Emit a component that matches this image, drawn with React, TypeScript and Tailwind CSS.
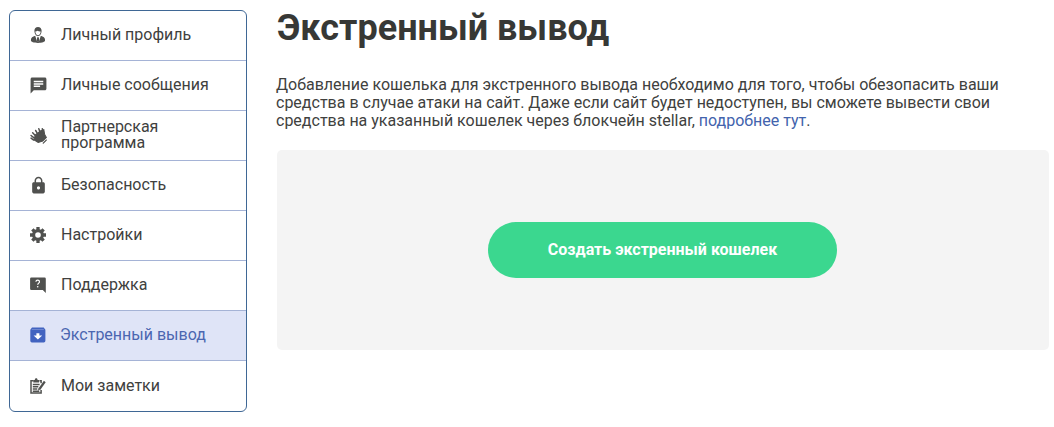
import type { ReactNode } from "react";
import clsx from "clsx";
import { MdChat, MdLock } from "react-icons/md";

// ─── Icons ────────────────────────────────────────────────────────────────────

function ProfileIcon() {
    return (
        <svg viewBox="0 0 16 16" className="h-4 w-4" fill="currentColor">
            <path d="M.9 13.3c0-2.500 1.700-3.700 4.300-4.500L7 14.500h2L10.800 8.800c2.600.8 4.300 2 4.300 4.500 0 1.700-3 2.600-7.100 2.600S.9 15 .9 13.300Z" />
            <path d="M7.200 10.300h1.600l.7 4.500h-3Z" />
            <path
                fillRule="evenodd"
                d="M4.400 3.800C4.400 1.400 5.800 0 8 0s3.600 1.400 3.600 3.800C11.600 6.800 9.900 9.200 8 9.200S4.400 6.800 4.400 3.800Zm.9.700C5.500 6.600 6.700 8.300 8 8.300s2.500-1.700 2.700-3.900C9.400 4.500 8.300 4.300 7.600 3.700 6.900 4.200 6.200 4.500 5.300 4.500Z"
            />
        </svg>
    );
}

function PartnersIcon() {
    return (
        <svg viewBox="0 0 16 16" className="h-[17px] w-[17px]" fill="none" stroke="currentColor" strokeLinecap="round">
            <path d="m5 7.500 5.500-4.300 2.500-.6.800 4.600 1.600 2.600-3.500 3.500-4.200 1.200-4-2.500Z" fill="currentColor" strokeWidth="1" />
            <path d="M3.500 12.300 1 10.500M3.500 10 1 8M4.700 7.800 2.500 5.500M6.900 5.900 5.300 3.300M9.200 4.200 8.300 1.700M12 3 11.600 1.700" strokeWidth="1.400" />
            <path d="M15.300 12.300 12.500 15.200" strokeWidth="1.200" />
        </svg>
    );
}

const GEAR_TEETH = [0, 45, 90, 135];

function SettingsIcon() {
    return (
        <svg viewBox="0 0 16 16" className="h-4 w-4" fill="none" stroke="currentColor">
            <circle cx="8" cy="8" r="4.400" strokeWidth="3.200" />
            {GEAR_TEETH.map((angle) => (
                <path key={angle} d="M8 0v3M8 13v3" strokeWidth="3.300" transform={`rotate(${angle} 8 8)`} />
            ))}
        </svg>
    );
}

function SupportIcon() {
    return (
        <svg viewBox="0 0 16 16" className="h-4 w-4">
            <path d="M1.300.5h13.300a1.200 1.200 0 0 1 1.200 1.200V15.900L12.800 12.900H1.300A1.200 1.200 0 0 1 .1 11.700V1.700A1.200 1.200 0 0 1 1.300.5Z" fill="currentColor" />
            <path d="M5.900 4.800c.1-1.200.8-1.700 1.800-1.700s1.800.6 1.800 1.600c0 1.300-1.800 1.500-1.800 3.100" fill="none" stroke="#fff" strokeWidth="1.200" />
            <circle cx="7.700" cy="9.800" r=".8" fill="#fff" />
        </svg>
    );
}

function WithdrawIcon() {
    return (
        <svg viewBox="0 0 16 16" className="h-4 w-4">
            <path d="M2 .5h11.700L15.400 2.700v11.100a1.600 1.600 0 0 1-1.600 1.600H1.900A1.600 1.600 0 0 1 .3 13.800V2.700Z" fill="currentColor" />
            <path d="M1.800 2.500h12" stroke="#dfe4f7" strokeOpacity=".4" strokeWidth=".7" />
            <path d="M6.400 6.300h3v2.200h2.800L7.900 12.400 3.600 8.500h2.800Z" fill="#fff" />
        </svg>
    );
}

function NotesIcon() {
    return (
        <svg viewBox="0 0 16 16" className="h-4 w-4" fill="none" stroke="currentColor">
            <path d="M9.500 2.700h1.600v2.500M11.100 12v3.100H1V2.700H3.500" strokeWidth="1.500" />
            <path d="M3.300 4.500V2H4.800C4.800.8 5.400.2 6.200.2S7.600.8 7.600 2h1.500v2.500Z" fill="currentColor" stroke="none" />
            <path d="M2.800 6.500h6.800M2.800 8.800h5.500M2.800 11h4.500M2.800 13.200h6.500" strokeWidth="1.400" />
            <path d="M14.800 3.500 9.500 11" strokeWidth="2.200" />
            <path d="m8.500 9.900 2 1.400-2.500 1.500Z" fill="currentColor" stroke="none" />
        </svg>
    );
}

// ─── Menu ─────────────────────────────────────────────────────────────────────

type MenuItem = {
    label: string;
    icon: ReactNode;
    active?: boolean;
};

const MENU_ITEMS: MenuItem[] = [
    { label: "Личный профиль", icon: <ProfileIcon /> },
    { label: "Личные сообщения", icon: <MdChat className="h-[19px] w-[19px]" /> },
    { label: "Партнерская программа", icon: <PartnersIcon /> },
    { label: "Безопасность", icon: <MdLock className="h-[19px] w-[19px]" /> },
    { label: "Настройки", icon: <SettingsIcon /> },
    { label: "Поддержка", icon: <SupportIcon /> },
    { label: "Экстренный вывод", icon: <WithdrawIcon />, active: true },
    { label: "Мои заметки", icon: <NotesIcon /> },
];

function Sidebar() {
    return (
        <nav className="h-[402px] w-[238px] shrink-0 overflow-hidden rounded-[6px] border border-[#3f6795]">
            {MENU_ITEMS.map((item) => (
                <a
                    key={item.label}
                    href="#"
                    className={clsx(
                        "flex h-[50px] items-center border-b border-[#a5b3d6] pb-px pl-[18px] text-base leading-4 last:border-b-0 last:pb-0",
                        item.active ? "bg-[#dfe4f7] text-[#4b66b0]" : "text-[#40413e]"
                    )}
                >
                    <span
                        className={clsx(
                            "flex w-5 shrink-0 justify-center",
                            item.active ? "text-[#4263c0]" : "text-[#50514f]"
                        )}
                    >
                        {item.icon}
                    </span>
                    <span className={clsx("w-[160px]", item.active ? "ml-3" : "ml-[13px]")}>{item.label}</span>
                </a>
            ))}
        </nav>
    );
}

// ─── Page ─────────────────────────────────────────────────────────────────────

export default function App() {
    return (
        <div className="flex h-[427px] items-start overflow-hidden bg-white pl-[9px] pt-[10px] font-['Roboto',sans-serif] text-[#40413e]">
            <Sidebar />
            <main className="ml-[30px] w-[772px] shrink-0">
                <h1 className="text-[36px] font-bold leading-9 text-[#373835]">Экстренный вывод</h1>
                <p className="-ml-px mt-[30px] text-base leading-[18px]">
                    Добавление кошелька для экстренного вывода необходимо для того, чтобы обезопасить ваши средства в случае
                    атаки на сайт. Даже если сайт будет недоступен, вы сможете вывести свои средства на указанный кошелек
                    через блокчейн stellar,{" "}
                    <a href="#" className="text-[#4263ad]">подробнее тут</a>.
                </p>
                <section className="mt-5 flex h-[200px] items-center rounded-[5px] bg-[#f4f4f4] pl-[211px]">
                    <button
                        type="button"
                        className="h-14 w-[349px] rounded-full bg-[#3bd78f] text-base font-bold text-white"
                    >
                        Создать экстренный кошелек
                    </button>
                </section>
            </main>
        </div>
    );
}
